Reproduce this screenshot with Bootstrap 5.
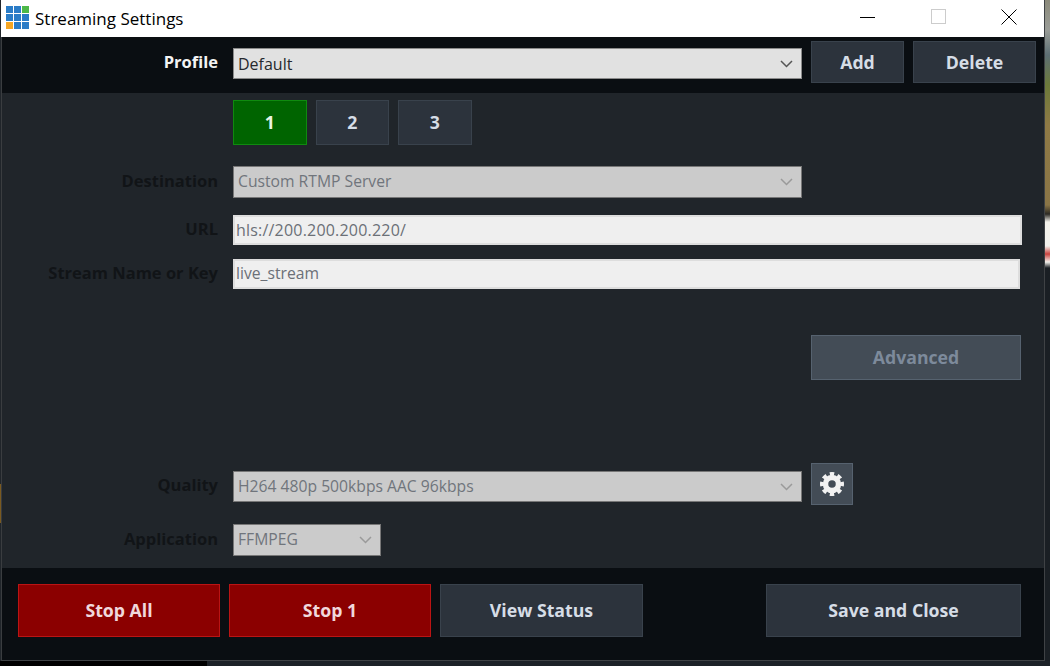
<!DOCTYPE html>
<html lang="en">
<head>
<meta charset="utf-8">
<title>Streaming Settings</title>
<link href="https://cdn.jsdelivr.net/npm/bootstrap@5.3.0/dist/css/bootstrap.min.css" rel="stylesheet">
<style>
html,body{height:666px;overflow:hidden;}
body{background:#1c2127;font-family:"Open Sans","Noto Sans",sans-serif;color:#fff;}
.desk{width:1050px;height:666px;}
.win{width:1044px;height:661px;flex:none;background:#20252a;border-left:1px solid #3a3d40;border-right:1px solid #3f4245;border-bottom:1px solid #3f4245;}
.titlebar{height:37px;background:#fff;color:#000;font-size:17px;padding-left:4px;margin-left:-1px;}
.ttl{margin-left:5px;}
.tctl{display:inline-flex;width:26px;justify-content:center;}
.tctls{padding:0 22px 3px 0;}
.tc-a{margin-right:45px;}
.tc-b{margin-right:44px;}
.topbar{height:56px;background:#0a0e12;}
.lbl{width:216px;text-align:right;font-size:16.5px;line-height:24px;font-weight:700;color:#111417;flex:none;}
.lbl-on{color:#f4f4f4;margin-top:13px;}
.fld{height:30px;width:569px;margin-left:15px;padding:0 4px;background:#e1e1e1;border:1px solid #8b8b8b;color:#26292d;font-size:15.7px;display:flex;align-items:center;justify-content:space-between;}
.fld svg{margin-right:4px;flex:none;}
.fld-prof{font-size:16px;height:31px;margin-top:11px;}
.fld-off{background:#cbcbcb;color:#70757c;border-color:#777;}
.fld-dest{height:32px;}
.fld-txt{background:#efefef;color:#6b7077;border:2px solid #ddd;padding:0 1px;}
.fld-url{width:789px;font-size:16px;letter-spacing:.2px;}
.fld-key{width:787px;}
.fld-qual{height:31px;margin-top:8px;}
.fld-app{width:148px;height:32px;}
.dbtn{background:#2c333c;border:1px solid #39424c;color:#d6dde6;font-size:17.7px;font-weight:700;border-radius:0;padding:0;display:flex;align-items:center;justify-content:center;}
.dbtn:hover{background:#2c333c;color:#d6dde6;border-color:#39424c;}
.b-add{width:93px;height:42px;margin:4px 0 0 9px;}
.b-del{width:123px;height:42px;margin:4px 0 0 9px;}
.b-num{width:73.5px;height:45px;}
.b-green,.b-green:hover{background:#006400;border-color:#0f8a0f;color:#e9f5e4;}
.b-off,.b-off:hover{background:#434c56;border-color:#56626f;color:#7d8a9b;}
.b-adv{width:210px;height:45px;}
.b-gear{width:42px;height:42px;margin-left:9px;}
.b-red,.b-red:hover{background:#8b0000;border-color:#bb1414;color:#f0d8dc;}
.b-foot{width:202px;height:53px;}
.b-view{width:203px;}
.b-save{width:255px;height:53px;margin-left:auto;margin-right:23px;}
.main{height:475px;}
.numrow{padding:7px 0 0 231px;gap:9px;height:52px;}
.frow{display:flex;align-items:center;}
.frow .lbl{padding-bottom:2px;}
.r-dest{margin-top:21px;height:32px;}
.r-url{margin-top:17px;}
.r-key{margin-top:14px;}
.r-adv{margin-top:46px;padding-left:809px;}
.r-qual{margin-top:83px;align-items:flex-start;}
.r-qual .lbl{margin-top:10px;padding-bottom:0;}
.r-app{margin-top:19px;}
.footbar{height:92px;background:#0a0e12;padding:16px 0 0 16px;gap:9px;}
.edge{width:5px;flex:none;background:linear-gradient(#8b8a7a 0,#9a9d98 30px,#5d6f74 55px,#6c7a3a 85px,#8f7a45 125px,#8a7546 205px,#2c2a24 214px,#f3f1ea 222px,#f2f1ec 246px,#c9433f 254px,#f2f1ec 262px,#1a1f24 268px,#1a1f24 100%);}
.edge-l{width:1px;flex:none;background:linear-gradient(#20252a 484px,#7a5a20 484px,#7a5a20 523px,#20252a 523px);}
.under{height:5px;}
.under-a{width:207px;background:#000;}
.under-b{flex:1;background:#1c2127;}
</style>
</head>
<body>
<div class="desk d-flex flex-column">
  <div class="d-flex flex-grow-0">
    <div class="edge-l"></div>
    <div class="win d-flex flex-column">
      <div class="titlebar d-flex align-items-center justify-content-between">
        <div class="d-flex align-items-center">
          <svg width="25" height="25" viewBox="0 0 25 25" aria-hidden="true">
            <rect x="1" y="0" width="7" height="7" fill="#2a7cc7"/><rect x="9" y="0" width="7" height="7" fill="#2a7cc7"/><rect x="17" y="0" width="7" height="7" fill="#4db848"/>
            <rect x="1" y="8" width="7" height="7" fill="#2a7cc7"/><rect x="9" y="8" width="7" height="7" fill="#2a7cc7"/><rect x="17" y="8" width="7" height="7" fill="#2a7cc7"/>
            <rect x="1" y="16" width="7" height="7" fill="#f5a623"/><rect x="9" y="16" width="7" height="7" fill="#2a7cc7"/><rect x="17" y="16" width="7" height="7" fill="#2a7cc7"/>
          </svg>
          <span class="ttl">Streaming Settings</span>
        </div>
        <div class="d-flex align-items-center tctls">
          <span class="tctl tc-a"><svg width="16" height="16" viewBox="0 0 16 16" aria-hidden="true"><path d="M0 8.500h15" stroke="#000" stroke-width="1"/></svg></span>
          <span class="tctl tc-b"><svg width="16" height="16" viewBox="0 0 16 16" aria-hidden="true"><rect x=".5" y=".5" width="14" height="14" fill="none" stroke="#ccc"/></svg></span>
          <span class="tctl"><svg width="16" height="16" viewBox="0 0 16 16" aria-hidden="true"><path d="M.5.500l15 15M15.500.500l-15 15" stroke="#000" stroke-width="1"/></svg></span>
        </div>
      </div>
      <div class="topbar d-flex align-items-start">
        <div class="lbl lbl-on">Profile</div>
        <div class="fld fld-prof"><span>Default</span><svg width="13" height="8" viewBox="0 0 13 8" aria-hidden="true"><path d="M1 1l5.500 5.500L12 1" fill="none" stroke="#555" stroke-width="1.500"/></svg></div>
        <button class="btn dbtn b-add" type="button">Add</button>
        <button class="btn dbtn b-del" type="button">Delete</button>
      </div>
      <div class="main d-flex flex-column">
        <div class="d-flex numrow">
          <button class="btn dbtn b-num b-green" type="button">1</button>
          <button class="btn dbtn b-num" type="button">2</button>
          <button class="btn dbtn b-num" type="button">3</button>
        </div>
        <div class="frow r-dest">
          <div class="lbl">Destination</div>
          <div class="fld fld-off fld-dest"><span>Custom RTMP Server</span><svg width="13" height="8" viewBox="0 0 13 8" aria-hidden="true"><path d="M1 1l5.500 5.500L12 1" fill="none" stroke="#9a9a9a" stroke-width="1.500"/></svg></div>
        </div>
        <div class="frow r-url">
          <div class="lbl">URL</div>
          <div class="fld fld-txt fld-url">hls://200.200.200.220/</div>
        </div>
        <div class="frow r-key">
          <div class="lbl">Stream Name or Key</div>
          <div class="fld fld-txt fld-key">live_stream</div>
        </div>
        <div class="frow r-adv">
          <button class="btn dbtn b-off b-adv" type="button">Advanced</button>
        </div>
        <div class="frow r-qual">
          <div class="lbl">Quality</div>
          <div class="fld fld-off fld-qual"><span>H264 480p 500kbps AAC 96kbps</span><svg width="13" height="8" viewBox="0 0 13 8" aria-hidden="true"><path d="M1 1l5.500 5.500L12 1" fill="none" stroke="#9a9a9a" stroke-width="1.500"/></svg></div>
          <button class="btn dbtn b-off b-gear" type="button" aria-label="Quality settings">
            <svg width="24" height="24" viewBox="0 0 24 24" aria-hidden="true"><circle cx="12" cy="12" r="6.500" fill="none" stroke="#f2f2f2" stroke-width="5.500"/><circle cx="12" cy="12" r="10.200" fill="none" stroke="#f2f2f2" stroke-width="3.600" pathLength="80" stroke-dasharray="5.500 4.500" stroke-dashoffset="2.750"/></svg>
          </button>
        </div>
        <div class="frow r-app">
          <div class="lbl">Application</div>
          <div class="fld fld-off fld-app"><span>FFMPEG</span><svg width="13" height="8" viewBox="0 0 13 8" aria-hidden="true"><path d="M1 1l5.500 5.500L12 1" fill="none" stroke="#9a9a9a" stroke-width="1.500"/></svg></div>
        </div>
      </div>
      <div class="footbar d-flex align-items-start">
        <button class="btn dbtn b-foot b-red" type="button">Stop All</button>
        <button class="btn dbtn b-foot b-red" type="button">Stop 1</button>
        <button class="btn dbtn b-foot b-view" type="button">View Status</button>
        <button class="btn dbtn b-save" type="button">Save and Close</button>
      </div>
    </div>
    <div class="edge"></div>
  </div>
  <div class="d-flex under"><div class="under-a"></div><div class="under-b"></div></div>
</div>
<script src="https://cdn.jsdelivr.net/npm/bootstrap@5.3.0/dist/js/bootstrap.bundle.min.js"></script>
</body>
</html>
